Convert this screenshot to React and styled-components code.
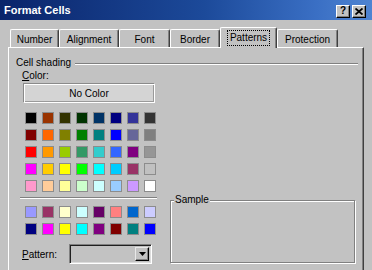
import React from 'react';
import styled, { createGlobalStyle, css } from 'styled-components';

const Global = createGlobalStyle`
  html, body { margin: 0; padding: 0; background: #c2c2c2; }
  body { font-family: "Liberation Sans", Arial, sans-serif; }
`;

const FACE = '#c2c2c2';

const Window = styled.div`
  width: 372px;
  height: 270px;
  overflow: hidden;
  background: ${FACE};
  display: flex;
  flex-direction: column;
`;

const TitleBar = styled.div`
  height: 20px;
  flex: none;
  display: flex;
  align-items: center;
  padding: 0 6px 0 4px;
  background: linear-gradient(to right, #0a246a 0%, #1c4a9a 55%, #3a6fc4 85%, #4f84d2 100%);
`;

const Title = styled.div`
  flex: 1;
  color: #fff;
  font-weight: bold;
  font-size: 11px;
  line-height: 13px;
  padding-top: 1px;
`;

const CaptionButton = styled.div`
  width: 14px;
  height: 13px;
  box-sizing: border-box;
  margin-left: ${p => (p.first ? 0 : 2)}px;
  margin-top: 2px;
  background: ${FACE};
  border: 1px solid;
  border-color: #fff #000 #000 #fff;
  box-shadow: inset -1px -1px 0 #808080;
  display: flex;
  align-items: center;
  justify-content: center;
  font-weight: bold;
  font-size: 10px;
  line-height: 10px;
  color: #000;
`;

const TabStrip = styled.div`
  height: 27px;
  flex: none;
  display: flex;
  align-items: flex-end;
  padding-left: 10px;
  position: relative;
  z-index: 1;
`;

const Tab = styled.div`
  width: ${p => p.w}px;
  height: 18px;
  box-sizing: border-box;
  background: ${FACE};
  border-top: 1px solid #fff;
  border-left: 1px solid #fff;
  border-right: 1px solid #404040;
  box-shadow: inset -1px 0 0 #808080;
  border-radius: 2px 2px 0 0;
  display: flex;
  align-items: center;
  justify-content: center;
  font-size: 10px;
  line-height: 12px;
  color: #000;
  padding-top: 3px;
  ${p =>
    p.selected &&
    css`
      height: 21px;
      margin-bottom: -1px;
      padding-top: 0;
    `}
`;

const FocusLabel = styled.span`
  outline: 1px dotted #000;
  padding: 1px 2px;
`;

const Panel = styled.div`
  flex: 1;
  margin-left: 8px;
  width: 356px;
  box-sizing: border-box;
  border-top: 1px solid #fff;
  border-left: 1px solid #fff;
  border-right: 1px solid #404040;
  box-shadow: inset -1px 0 0 #808080;
  padding: 8px 5px 0 7px;
  display: flex;
  flex-direction: column;
`;

const GroupHeader = styled.div`
  display: flex;
  align-items: center;
  height: 13px;
  font-size: 10px;
  line-height: 13px;
  color: #000;
`;

const EtchedLine = styled.div`
  flex: ${p => (p.fill ? 1 : 'none')};
  height: 0;
  border-top: 1px solid #808080;
  border-bottom: 1px solid #fff;
  margin-left: ${p => p.ml || 0}px;
  margin-top: ${p => p.mt || 0}px;
`;

const Content = styled.div`
  display: flex;
  align-items: flex-start;
`;

const LeftCol = styled.div`
  margin-left: 4px;
  width: 137px;
  flex: none;
  display: flex;
  flex-direction: column;
`;

const FieldLabel = styled.div`
  padding-left: 2px;
  font-size: 10px;
  line-height: 13px;
  color: #000;
  width: ${p => (p.w ? `${p.w}px` : 'auto')};
  flex: none;
  box-sizing: border-box;
  u { text-decoration: underline; }
`;

const NoColorButton = styled.div`
  margin: 1px 0 0 3px;
  width: 132px;
  height: 20px;
  box-sizing: border-box;
  border: 1px solid;
  border-color: #8a8a8a #fff #fff #8a8a8a;
  box-shadow: inset 1px 1px 0 #fff, inset -1px -1px 0 #9a9a9a;
  background: #d4d4d4;
  display: flex;
  align-items: center;
  justify-content: center;
  font-size: 10px;
  color: #000;
`;

const SwatchGrid = styled.div`
  display: grid;
  grid-template-columns: repeat(8, 12px);
  gap: 5px;
  margin-top: ${p => p.mt}px;
  padding-left: 5px;
`;

const Swatch = styled.div`
  width: 12px;
  height: 12px;
  box-sizing: border-box;
  border: 1px solid #8c8c8c;
  background: ${p => p.c};
`;

const PatternRow = styled.div`
  display: flex;
  align-items: center;
  margin-top: 9px;
  height: 20px;
`;

const Combo = styled.div`
  width: 83px;
  height: 20px;
  box-sizing: border-box;
  border: 1px solid;
  border-color: #808080 #fff #fff #808080;
  box-shadow: inset 1px 1px 0 #202020, inset -1px -1px 0 #dcdcdc;
  background: ${FACE};
  display: flex;
  justify-content: flex-end;
  align-items: center;
  padding: 2px;
`;

const DropButton = styled.div`
  width: 14px;
  height: 14px;
  box-sizing: border-box;
  background: ${FACE};
  border: 1px solid;
  border-color: #e8e8e8 #000 #000 #e8e8e8;
  box-shadow: inset -1px -1px 0 #808080;
  display: flex;
  align-items: center;
  justify-content: center;
`;

const SampleBox = styled.div`
  position: relative;
  align-self: flex-end;
  margin: 0 0 1px 13px;
  width: 185px;
  height: 63px;
  box-sizing: border-box;
  border: 1px solid #808080;
  box-shadow: inset 1px 1px 0 #fff, 1px 1px 0 #fff;
`;

const SampleLegend = styled.span`
  position: absolute;
  top: -8px;
  left: 3px;
  padding: 0 1px;
  background: ${FACE};
  font-size: 10px;
  line-height: 13px;
  color: #000;
`;

const mainColors = [
  '#000000', '#993300', '#333300', '#003300', '#003366', '#000080', '#333399', '#333333',
  '#800000', '#FF6600', '#808000', '#008000', '#008080', '#0000FF', '#666699', '#808080',
  '#FF0000', '#FF9900', '#99CC00', '#339966', '#33CCCC', '#3366FF', '#800080', '#969696',
  '#FF00FF', '#FFCC00', '#FFFF00', '#00FF00', '#00FFFF', '#00CCFF', '#993366', '#C0C0C0',
  '#FF99CC', '#FFCC99', '#FFFF99', '#CCFFCC', '#CCFFFF', '#99CCFF', '#CC99FF', '#FFFFFF',
];

const chartColors = [
  '#9999FF', '#993366', '#FFFFCC', '#CCFFFF', '#660066', '#FF8080', '#0066CC', '#CCCCFF',
  '#000080', '#FF00FF', '#FFFF00', '#00FFFF', '#800080', '#800000', '#008080', '#0000FF',
];

const tabs = [
  { label: 'Number', w: 49 },
  { label: 'Alignment', w: 60 },
  { label: 'Font', w: 51 },
  { label: 'Border', w: 50 },
  { label: 'Patterns', w: 57, selected: true },
  { label: 'Protection', w: 61 },
];

export default function App() {
  return (
    <>
      <Global />
      <Window>
        <TitleBar>
          <Title>Format Cells</Title>
          <CaptionButton first>?</CaptionButton>
          <CaptionButton>
            <svg width="8" height="7" viewBox="0 0 8 7">
              <path d="M0.5 0.5 L7.5 6.5 M7.5 0.5 L0.5 6.5" stroke="#000" strokeWidth="1.8" />
            </svg>
          </CaptionButton>
        </TitleBar>
        <TabStrip>
          {tabs.map(t => (
            <Tab key={t.label} w={t.w} selected={t.selected}>
              {t.selected ? <FocusLabel>{t.label}</FocusLabel> : t.label}
            </Tab>
          ))}
        </TabStrip>
        <Panel>
          <GroupHeader>
            Cell shading
            <EtchedLine fill ml={4} mt={2} />
          </GroupHeader>
          <Content>
            <LeftCol>
              <FieldLabel>
                <u>C</u>olor:
              </FieldLabel>
              <NoColorButton>No Color</NoColorButton>
              <SwatchGrid mt={9}>
                {mainColors.map((c, i) => (
                  <Swatch key={i} c={c} />
                ))}
              </SwatchGrid>
              <EtchedLine mt={5} />
              <SwatchGrid mt={7}>
                {chartColors.map((c, i) => (
                  <Swatch key={i} c={c} />
                ))}
              </SwatchGrid>
              <PatternRow>
                <FieldLabel w={49}>
                  <u>P</u>attern:
                </FieldLabel>
                <Combo>
                  <DropButton>
                    <svg width="7" height="4" viewBox="0 0 7 4">
                      <path d="M0 0 H7 L3.5 4 Z" fill="#000" />
                    </svg>
                  </DropButton>
                </Combo>
              </PatternRow>
            </LeftCol>
            <SampleBox>
              <SampleLegend>Sample</SampleLegend>
            </SampleBox>
          </Content>
        </Panel>
      </Window>
    </>
  );
}
